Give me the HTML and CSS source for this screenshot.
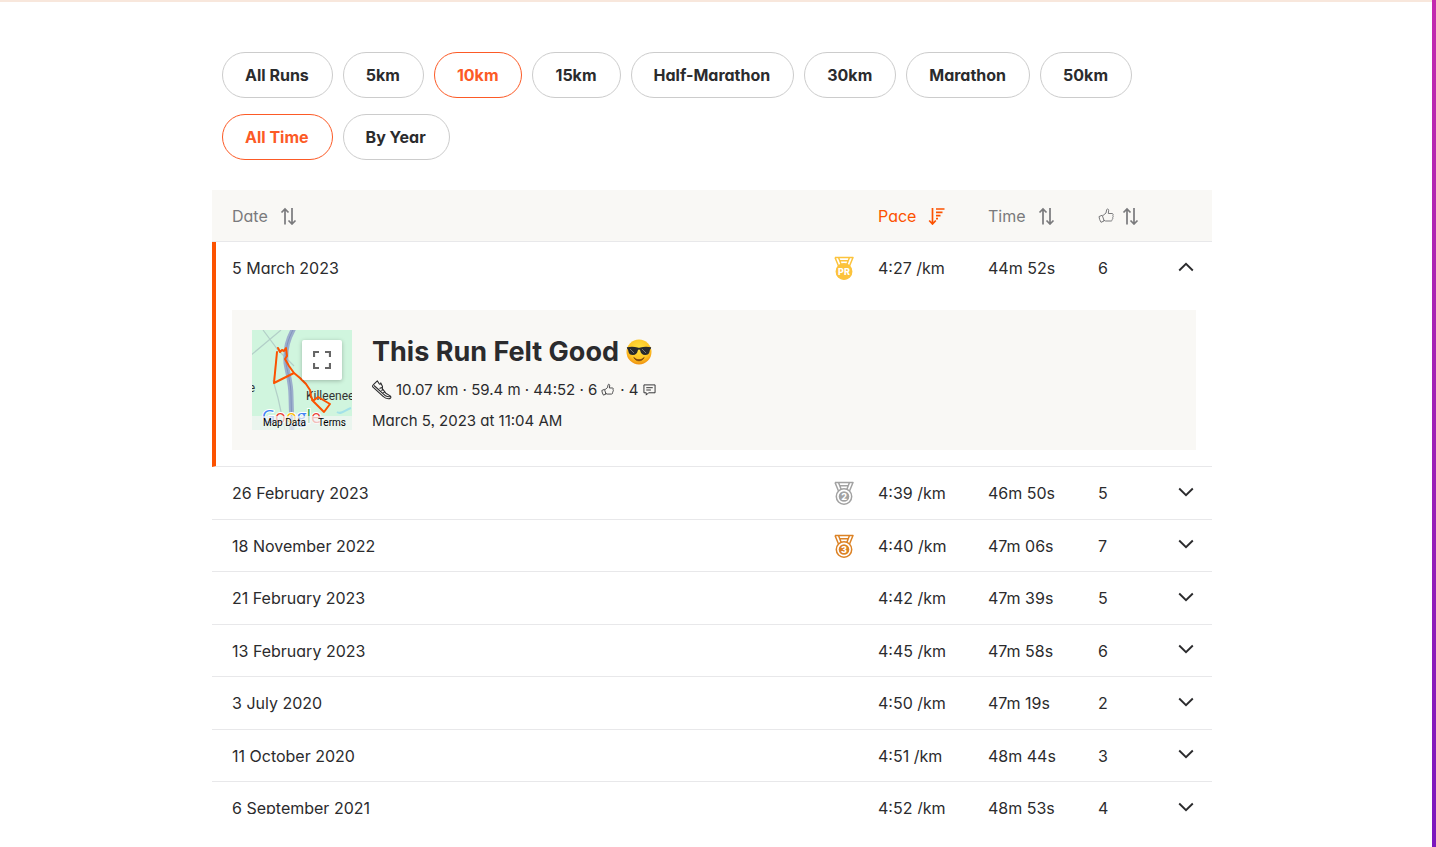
FILE: index.html
```
<!DOCTYPE html>
<html lang="en">
<head>
<meta charset="utf-8">
<meta name="viewport" content="width=device-width, initial-scale=1">
<title>Best efforts</title>
<link rel="stylesheet" href="styles.css">
</head>
<body>
<svg class="sprite" aria-hidden="true">
  <symbol id="sort" viewBox="0 0 16 18"><path d="M4.500 17.500V2M1 5.500L4.500 2 8 5.500M11.500 1v16M8 13.500l3.500 3.500 3.500-3.500" fill="none" stroke="currentColor" stroke-width="1.700"/></symbol>
  <symbol id="sort-active" viewBox="0 0 16 18"><path d="M4 1v16M.7 13.500L4 17l3.300-3.500M7.500 2H16M7.500 5.300h6.500M7.500 8.600H12M7.500 11.700h2" fill="none" stroke="currentColor" stroke-width="1.700"/></symbol>
  <symbol id="thumb" viewBox="0 0 16 16"><path d="M5 7.500L8 5l.7-3.500c.3-.8 2-.6 2 .7L10.300 5.500H14c1.200 0 1.500 1.300.8 1.900.6.600.5 1.500-.1 2 .4.700.2 1.400-.5 1.900.2.900-.3 1.700-1.300 1.700H7.500L5.300 12M1 8.600l3.200-1.400 2 5.700L3 14.300c-1-1.600-1.800-3.500-2-5.700z" fill="none" stroke="currentColor" stroke-width="1" stroke-linejoin="round"/></symbol>
  <symbol id="down" viewBox="0 0 16 10"><path d="M1.200 1.500L8 8.200l6.800-6.700" fill="none" stroke="currentColor" stroke-width="1.900"/></symbol>
  <symbol id="up" viewBox="0 0 16 10"><path d="M1.200 8.500L8 1.800l6.800 6.700" fill="none" stroke="currentColor" stroke-width="1.900"/></symbol>
  <symbol id="medal" viewBox="0 0 20 24"><path d="M1 1.500h18L15.500 10M1 1.500L4.500 10M4.500 1.500l2.600 6.800M15.500 1.500l-2.600 6.800M5.500 4.800h9" fill="none" stroke="currentColor" stroke-width="1.500" stroke-linejoin="round"/><circle cx="10" cy="15.500" r="7.700" fill="none" stroke="currentColor" stroke-width="1.500"/><circle cx="10" cy="15.500" r="5.300" fill="currentColor"/></symbol>
</svg>

<main class="page">
  <div class="content">
    <div class="filters">
      <div class="pills">
        <button class="pill">All Runs</button>
        <button class="pill">5km</button>
        <button class="pill pill-on" aria-pressed="true">10km</button>
        <button class="pill">15km</button>
        <button class="pill">Half-Marathon</button>
        <button class="pill">30km</button>
        <button class="pill">Marathon</button>
        <button class="pill">50km</button>
      </div>
      <div class="pills">
        <button class="pill pill-on" aria-pressed="true">All Time</button>
        <button class="pill">By Year</button>
      </div>
    </div>

    <div class="list">
      <table class="runs">
        <colgroup><col><col class="col-medal"><col class="col-value"><col class="col-value"><col class="col-likes"><col class="col-toggle"></colgroup>
        <thead>
          <tr>
            <th><button class="sort">Date <svg class="sort-icon"><use href="#sort"/></svg></button></th>
            <th></th>
            <th aria-sort="ascending"><button class="sort sort-on">Pace <svg class="sort-icon"><use href="#sort-active"/></svg></button></th>
            <th><button class="sort">Time <svg class="sort-icon"><use href="#sort"/></svg></button></th>
            <th><button class="sort sort-likes" aria-label="Likes"><svg class="thumb"><use href="#thumb"/></svg><svg class="sort-icon"><use href="#sort"/></svg></button></th>
            <th></th>
          </tr>
        </thead>
        <tbody>
          <tr class="open">
            <td>5 March 2023</td>
            <td><svg class="medal gold" viewBox="0 0 20 24"><use href="#medal"/><circle cx="10" cy="15.500" r="8" fill="currentColor"/><text x="10" y="19" class="medal-text">PR</text></svg></td>
            <td>4:27 /km</td><td>44m 52s</td><td>6</td>
            <td><button class="toggle" aria-label="Collapse" aria-expanded="true"><svg class="chevron"><use href="#up"/></svg></button></td>
          </tr>
          <tr class="detail">
            <td colspan="6">
              <article class="card">
                <div class="map">
                  <svg class="map-art" viewBox="0 0 100 100" aria-hidden="true">
                    <rect width="100" height="100" fill="#d0f5de"/>
                    <g fill="none" stroke="#b3cfc8" stroke-width="1.200"><path d="M-2 26L29 0M11 0l15 20 16 16M21 50l5 18 7 32M22 50l3-28"/></g>
                    <path d="M85 82c4 3 8-2 14-4" fill="none" stroke="#a3e1e9" stroke-width="2"/>
                    <path d="M42 -2C36 9 33 18 34 33c2 12 5 20 5 33l1 36" fill="none" stroke="#9caecd" stroke-width="5"/>
                    <path d="M42 -2C36 9 33 18 34 33c2 12 5 20 5 33l1 36" fill="none" stroke="#8294bd" stroke-width="1"/>
                    <text x="0" y="62" class="place" text-anchor="middle">e</text>
                    <text x="54" y="70" class="place">Killeenee</text>
                    <text x="10" y="93" class="google"><tspan fill="#4285f4">G</tspan><tspan fill="#ea4335">o</tspan><tspan fill="#fbbc05">o</tspan><tspan fill="#4285f4">g</tspan><tspan fill="#34a853">l</tspan><tspan fill="#ea4335">e</tspan></text>
                    <path d="M25 22L22 53 42 43M26 18l2 4 2-2 2 1 2-3 1 8-2 3 4 7 5 7 6 5 6 6 4 6 1 6 2 5 5-4 12 7-6 8-12-12" fill="none" stroke="#fc5200" stroke-width="2" stroke-linejoin="round" stroke-linecap="round"/>
                  </svg>
                  <button class="fullscreen" aria-label="Toggle fullscreen"><svg class="full-icon" viewBox="0 0 18 18"><path d="M1 6V1h5M12 1h5v5M17 12v5h-5M6 17H1v-5" fill="none" stroke="#666" stroke-width="2.200"/></svg></button>
                  <div class="legal"><button class="legal-item">Map Data</button><a class="legal-item" href="#">Terms</a></div>
                </div>
                <div class="summary">
                  <h2 class="title">This Run Felt Good
                    <svg class="emoji" viewBox="0 0 26 26" role="img" aria-label="Smiling face with sunglasses"><defs><radialGradient id="face" cx=".5" cy=".35" r=".65"><stop offset="0" stop-color="#ffe23f"/><stop offset=".7" stop-color="#ffc223"/><stop offset="1" stop-color="#ef900f"/></radialGradient></defs><circle cx="13" cy="13" r="12.500" fill="url(#face)"/><path d="M.8 8.200c4-.8 8-.7 10.700.4 1 .3 2 .3 3 0 2.700-1.100 6.700-1.200 10.700-.4l-.5 1.800c-.7.200-.8 1-1 2-.6 3-2 4-4.600 4-2.800 0-4.300-1.700-4.900-4.500-.4-1.300-2-1.300-2.400 0-.6 2.800-2.100 4.500-4.900 4.500-2.600 0-4-1-4.600-4-.2-1-.3-1.800-1-2z" fill="#292a2c"/><path d="M4 10l4 4M16 10l4 4" stroke="#777" stroke-width="1"/><path d="M7.800 18.500c3 3 7.400 3 10.400 0-2 4.400-8.400 4.400-10.400 0z" fill="#79420b" stroke="#79420b" stroke-width=".8"/></svg>
                  </h2>
                  <p class="stats">
                    <svg class="shoe" viewBox="0 0 20 20" aria-hidden="true"><path d="M5.300.8L7 3.500c.6 1 1.600.8 1.800-.6l1.700 3.600-.2 2.200 3.500 4.500 4.400 2.700c1 .9.900 2.500-.5 2.700-2.200.4-4.700-.4-6.600-2.200L1 7.200c-.7-.8-.5-1.700.2-2.300zM2 5.500l11.500 10.300c1.700 1 3.800 1.200 5.500.8M7.500 8.600l2.300-1M9.300 10.600l2.200-1.100M11 12.600l2.200-1" fill="none" stroke="currentColor" stroke-width="1.100" stroke-linejoin="round"/></svg>
                    <span>10.07 km · 59.4 m · 44:52 · 6</span>
                    <svg class="small-icon"><use href="#thumb"/></svg>
                    <span class="comments">· 4</span>
                    <svg class="small-icon" viewBox="0 0 14 14" aria-hidden="true"><path d="M1 1.500h12v8.500H6l-2.500 2.500V10H1zM3.500 4.500h7M3.500 7h5" fill="none" stroke="currentColor"/></svg>
                  </p>
                  <p class="when">March 5, 2023 at 11:04 AM</p>
                </div>
              </article>
            </td>
          </tr>
          <tr><td>26 February 2023</td><td><svg class="medal silver" viewBox="0 0 20 24"><use href="#medal"/><text x="10" y="19" class="medal-text">2</text></svg></td><td>4:39 /km</td><td>46m 50s</td><td>5</td><td><button class="toggle" aria-label="Expand"><svg class="chevron"><use href="#down"/></svg></button></td></tr>
          <tr><td>18 November 2022</td><td><svg class="medal bronze" viewBox="0 0 20 24"><use href="#medal"/><text x="10" y="19" class="medal-text">3</text></svg></td><td>4:40 /km</td><td>47m 06s</td><td>7</td><td><button class="toggle" aria-label="Expand"><svg class="chevron"><use href="#down"/></svg></button></td></tr>
          <tr><td>21 February 2023</td><td></td><td>4:42 /km</td><td>47m 39s</td><td>5</td><td><button class="toggle" aria-label="Expand"><svg class="chevron"><use href="#down"/></svg></button></td></tr>
          <tr><td>13 February 2023</td><td></td><td>4:45 /km</td><td>47m 58s</td><td>6</td><td><button class="toggle" aria-label="Expand"><svg class="chevron"><use href="#down"/></svg></button></td></tr>
          <tr><td>3 July 2020</td><td></td><td>4:50 /km</td><td>47m 19s</td><td>2</td><td><button class="toggle" aria-label="Expand"><svg class="chevron"><use href="#down"/></svg></button></td></tr>
          <tr><td>11 October 2020</td><td></td><td>4:51 /km</td><td>48m 44s</td><td>3</td><td><button class="toggle" aria-label="Expand"><svg class="chevron"><use href="#down"/></svg></button></td></tr>
          <tr><td>6 September 2021</td><td></td><td>4:52 /km</td><td>48m 53s</td><td>4</td><td><button class="toggle" aria-label="Expand"><svg class="chevron"><use href="#down"/></svg></button></td></tr>
        </tbody>
      </table>
    </div>
  </div>
</main>
<div class="edge"></div>
</body>
</html>
```

FILE: styles.css
```
* { box-sizing: border-box; }

body {
  margin: 0;
  height: 100vh;
  display: flex;
  overflow: hidden;
  background: #fff;
  color: #2b2b2d;
  font: 16px/20px Inter, "Liberation Sans", sans-serif;
  font-feature-settings: "cv11", "ss03";
}

button {
  font: inherit;
  font-feature-settings: inherit;
  color: inherit;
  background: none;
  border: 0;
  padding: 0;
  cursor: pointer;
}

svg { display: block; }
.sprite { position: absolute; width: 0; height: 0; }

.page {
  flex: 1;
  min-width: 0;
  padding: 50px 8px 33px 0;
  border-top: 2px solid #f8e7dc;
}

.edge {
  width: 4px;
  background: linear-gradient(#c32aae, #7c17bd);
}

.content {
  max-width: 1000px;
  height: 100%;
  margin: 0 auto;
  display: flex;
  flex-direction: column;
  gap: 30px;
}

.filters {
  display: grid;
  gap: 16px;
  padding: 0 10px;
}

.pills { display: flex; flex-wrap: wrap; gap: 10px; }

.pill {
  height: 46px;
  padding: 0 23px 0 22px;
  border: 1px solid #ccc;
  border-radius: 23px;
  background: #fff;
  font-weight: 700;
}

.pill-on { color: #fc5a26; border-color: #fc5a26; }

.list { flex: 1; min-height: 0; overflow: hidden; }

.runs {
  width: 100%;
  table-layout: fixed;
  border-collapse: separate;
  border-spacing: 0;
}

.col-medal { width: 44px; }
.col-value { width: 110px; }
.col-likes { width: 80px; }
.col-toggle { width: 34px; }

th, td {
  height: 53px;
  padding: 0;
  text-align: left;
  vertical-align: middle;
  border-bottom: 1px solid #e8e8ea;
}

tr:nth-child(even) td, .open td { height: 52px; }
th:first-child, td:first-child { padding-left: 20px; }

th {
  height: 52px;
  background: #f9f8f5;
  color: #7a7a7c;
  font-weight: 400;
}

.sort { display: flex; align-items: center; gap: 12px; }
.sort-likes { gap: 8px; }
.sort-on { color: #fc5200; }
.sort-icon { width: 17px; height: 18px; }
.thumb { width: 16px; height: 16px; }

.open td { border-bottom: 0; }
.open td:first-child { border-left: 4px solid #fc5200; padding-left: 16px; }

.medal { width: 20px; height: 24px; }
.gold { color: #fcc33c; }
.silver { color: #a2a2a2; }
.bronze { color: #dc8225; }
.medal-text {
  fill: #fff;
  font-size: 9px;
  font-weight: 800;
  text-anchor: middle;
}

.toggle { display: block; padding-bottom: 3px; }
.chevron { width: 16px; height: 10px; }

.detail td:first-child {
  padding: 16px;
  border-left: 4px solid #fc5200;
}

.card {
  display: flex;
  gap: 20px;
  padding: 20px;
  background: #f9f8f5;
}

.map {
  position: relative;
  width: 100px;
  height: 100px;
  overflow: hidden;
}

.map-art { width: 100%; height: 100%; }
.place { font: 12px Roboto, sans-serif; fill: #333; }
.google {
  font: 18px "Open Sans", sans-serif;
  stroke: #fff;
  stroke-width: 2px;
  paint-order: stroke;
}

.fullscreen {
  position: absolute;
  top: 10px;
  right: 10px;
  width: 40px;
  height: 40px;
  display: grid;
  place-items: center;
  background: #fff;
  border-radius: 2px;
  box-shadow: 0 1px 4px rgba(0, 0, 0, 0.25);
}

.full-icon { width: 18px; height: 18px; }

.legal {
  position: absolute;
  right: 0;
  bottom: 0;
  left: 0;
  height: 14px;
  padding: 0 6px;
  display: flex;
  justify-content: flex-end;
  gap: 12px;
  background: rgba(245, 245, 245, 0.7);
}

.legal-item {
  color: #000;
  font: 10px/14px Roboto, sans-serif;
  text-decoration: none;
  white-space: nowrap;
}

.summary {
  display: flex;
  flex-direction: column;
  font-size: 15px;
  line-height: 18px;
}

.title {
  display: flex;
  align-items: center;
  gap: 7px;
  margin: 5px 0 0;
  font-size: 27px;
  line-height: 34px;
  font-weight: 700;
}

.emoji { width: 26px; height: 26px; }

.stats {
  display: flex;
  align-items: center;
  gap: 4px;
  margin: 11px 0 12px;
}

.shoe { width: 20px; height: 20px; }
.small-icon { width: 13px; height: 14px; }
.comments { margin-left: 2px; }
.when { margin: 0; }
```
